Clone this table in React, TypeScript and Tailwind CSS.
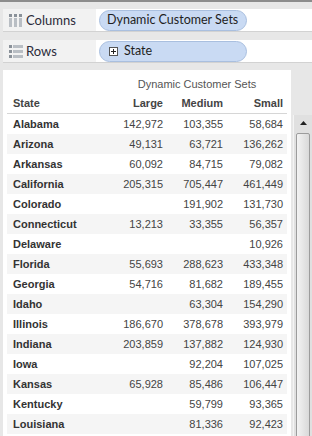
import React from "react";

type Row = [string, string, string, string];

const rows: Row[] = [
  ["Alabama", "142,972", "103,355", "58,684"],
  ["Arizona", "49,131", "63,721", "136,262"],
  ["Arkansas", "60,092", "84,715", "79,082"],
  ["California", "205,315", "705,447", "461,449"],
  ["Colorado", "", "191,902", "131,730"],
  ["Connecticut", "13,213", "33,355", "56,357"],
  ["Delaware", "", "", "10,926"],
  ["Florida", "55,693", "288,623", "433,348"],
  ["Georgia", "54,716", "81,682", "189,455"],
  ["Idaho", "", "63,304", "154,290"],
  ["Illinois", "186,670", "378,678", "393,979"],
  ["Indiana", "203,859", "137,882", "124,930"],
  ["Iowa", "", "92,204", "107,025"],
  ["Kansas", "65,928", "85,486", "106,447"],
  ["Kentucky", "", "59,799", "93,365"],
  ["Louisiana", "", "81,336", "92,423"],
];

const shelfFont = { fontFamily: 'Lato, "Noto Sans", sans-serif' };
const tableFont = { fontFamily: '"Liberation Sans", Arial, sans-serif' };

function ColumnsIcon() {
  return (
    <svg width="14" height="13" viewBox="0 0 14 13">
      <rect x="0" y="0" width="3" height="3" fill="#8a9199" />
      <rect x="5" y="0" width="3" height="3" fill="#8a9199" />
      <rect x="10" y="0" width="3" height="3" fill="#8a9199" />
      <rect x="0" y="4" width="3" height="9" fill="#b9bec4" />
      <rect x="5" y="4" width="3" height="9" fill="#b9bec4" />
      <rect x="10" y="4" width="3" height="9" fill="#b9bec4" />
    </svg>
  );
}

function RowsIcon() {
  return (
    <svg width="14" height="13" viewBox="0 0 14 13">
      <rect x="0" y="0" width="3" height="3" fill="#8a9199" />
      <rect x="0" y="5" width="3" height="3" fill="#8a9199" />
      <rect x="0" y="10" width="3" height="3" fill="#8a9199" />
      <rect x="4" y="0" width="10" height="3" fill="#b9bec4" />
      <rect x="4" y="5" width="10" height="3" fill="#b9bec4" />
      <rect x="4" y="10" width="10" height="3" fill="#b9bec4" />
    </svg>
  );
}

function Shelf({ icon, label, children }: { icon: React.ReactNode; label: string; children: React.ReactNode }) {
  return (
    <div className="ml-[3px] flex h-[23px] border-b border-[#d2d2d2]" style={shelfFont}>
      <div className="flex w-[93px] items-center bg-[#f2f2f2]">
        <div className="ml-[6px] mr-[3px] flex items-center">{icon}</div>
        <span className="text-[13px] leading-none text-[#2b2b3a]">{label}</span>
      </div>
      <div className="flex flex-1 items-center bg-white pl-[3px]">{children}</div>
    </div>
  );
}

function Pill({ children }: { children: React.ReactNode }) {
  return (
    <div className="flex h-[21px] w-[148px] items-center whitespace-nowrap rounded-full border border-[#a9bfdf] bg-[#c9daf3] pl-[7px] text-[12.5px] leading-none text-[#1e1e1e]">
      {children}
    </div>
  );
}

export default function App() {
  return (
    <div className="h-[436px] w-[312px] overflow-hidden border-t-[2px] border-[#8c8c8c] bg-[#e7e7e7]">
      <div className="flex flex-col gap-[8px] pt-[7px]">
        <Shelf icon={<ColumnsIcon />} label="Columns">
          <Pill>Dynamic Customer Sets</Pill>
        </Shelf>
        <Shelf icon={<RowsIcon />} label="Rows">
          <Pill>
            <span className="ml-[2px] mr-[6px] flex h-[9px] w-[9px] items-center justify-center border border-[#555] bg-white">
              <svg width="5" height="5" viewBox="0 0 5 5">
                <rect x="0" y="2" width="5" height="1" fill="#222" />
                <rect x="2" y="0" width="1" height="5" fill="#222" />
              </svg>
            </span>
            State
          </Pill>
        </Shelf>
      </div>

      <div className="mt-[7px] flex">
        <div className="ml-[3px] w-[288px] bg-white px-[4px]" style={tableFont}>
          <div className="h-[24px] pt-[7px] text-[11px] leading-[14px] text-[#555]">
            <div className="ml-[100px] w-[180px] text-center">Dynamic Customer Sets</div>
          </div>
          <div className="flex h-[19px] items-center text-[11px] font-bold text-[#444]">
            <div className="w-[96px] pl-[6px]">State</div>
            <div className="w-[60px] text-right">Large</div>
            <div className="w-[60px] text-right">Medium</div>
            <div className="w-[60px] text-right">Small</div>
          </div>
          <div className="h-px bg-[#d6d6d6]" />
          {rows.map((r, i) => (
            <div
              key={r[0]}
              className={`flex h-[20px] items-center text-[11px] ${i % 2 === 1 ? "bg-[#f5f5f5]" : "bg-white"}`}
            >
              <div className="w-[96px] pl-[6px] font-bold text-[#333]">{r[0]}</div>
              <div className="w-[60px] text-right text-[#444]">{r[1]}</div>
              <div className="w-[60px] text-right text-[#444]">{r[2]}</div>
              <div className="w-[60px] text-right text-[#444]">{r[3]}</div>
            </div>
          ))}
        </div>
        <div className="ml-[2px] flex w-[19px] flex-col pt-[45px]">
          <div className="flex h-[376px] flex-col border-l border-[#f4f4f4] bg-[#e0e0e0]">
            <div className="flex h-[16px] items-center justify-center">
              <svg width="7" height="4" viewBox="0 0 7 4">
                <polygon points="3.5,0 7,4 0,4" fill="#222" />
              </svg>
            </div>
            <div className="mx-[2px] mt-[2px] flex-1 rounded-[2px] border border-[#9c9c9c] bg-[linear-gradient(to_right,#f3f3f3,#e6e6e6_50%,#d9d9d9)]" />
          </div>
        </div>
      </div>
    </div>
  );
}
